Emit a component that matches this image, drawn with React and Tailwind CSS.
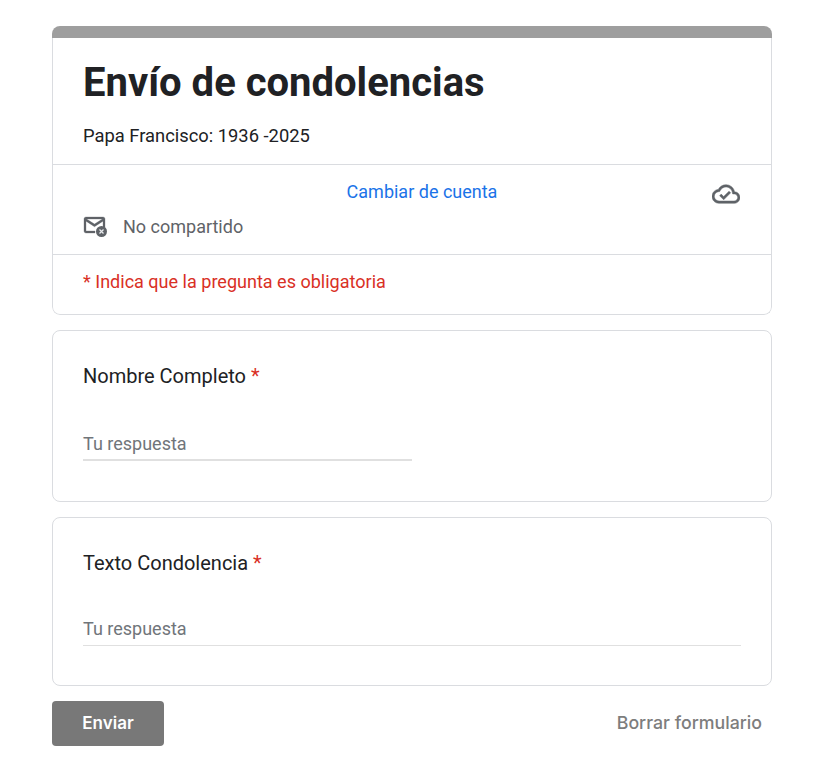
import React from 'react';

const MailOffIcon = () => (
  <svg width="24" height="24" viewBox="0 0 24 24" className="text-[#5f6368]">
    <path fill="currentColor" stroke="currentColor" strokeWidth="0.3" d="M3 2h17c1.1 0 2 .9 2 2v8.5h-2V6.2l-8.5 5.5L3 6.2V16h9v2H3c-1.1 0-2-.9-2-2V4c0-1.1.9-2 2-2zm.6 2l7.9 5.1L19.4 4H3.6z" />
    <circle cx="18.5" cy="16.5" r="5.5" fill="currentColor" />
    <path stroke="#e8eaed" strokeWidth="1.3" d="M16.5 14.5l4 4M20.5 14.5l-4 4" />
  </svg>
);

const CloudCheckIcon = () => (
  <svg width="28" height="28" viewBox="0 0 24 24" className="text-[#5f6368]">
    <path fill="currentColor" stroke="currentColor" strokeWidth="0.4" d="M19.35 10.04C18.67 6.59 15.64 4 12 4 9.11 4 6.6 5.64 5.35 8.04 2.34 8.36 0 10.91 0 14c0 3.31 2.69 6 6 6h13c2.76 0 5-2.24 5-5 0-2.64-2.05-4.78-4.65-4.96zM19 18H6c-2.21 0-4-1.79-4-4 0-2.05 1.53-3.76 3.56-3.97l1.07-.11.5-.95C8.08 7.14 9.94 6 12 6c2.62 0 4.88 1.86 5.39 4.43l.3 1.5 1.53.11c1.56.1 2.78 1.41 2.78 2.96 0 1.65-1.35 3-3 3zm-9-3.82l-2.09-2.09L6.5 13.5 10 17l6.01-6.01-1.41-1.41z" />
  </svg>
);

const Question = ({ label, hint, lineClass, className }) => (
  <div className={`bg-white border border-[#dadce0] rounded-lg px-[30px] ${className}`}>
    <div className="text-[20px] leading-6 text-[#202124]">
      {label} <span className="text-[#d93025]">*</span>
    </div>
    <div className={lineClass}>{hint}</div>
  </div>
);

export default function App() {
  return (
    <div className="min-h-screen bg-white font-['Roboto',sans-serif] pt-[26px] pl-[52px]">
      <div className="w-[720px] flex flex-col gap-[15px]">
        {/* Header card */}
        <div className="bg-white rounded-lg overflow-hidden">
          <div className="h-[12px] bg-[#9e9e9e]"></div>
          <div className="border-x border-b border-[#dadce0] rounded-b-lg">
            <div className="px-[30px] pt-[23px] pb-[16px] border-b border-[#dadce0]">
              <h1 className="text-[40px] leading-[44px] font-bold text-[#202124]">Envío de condolencias</h1>
              <p className="mt-[19px] text-[18.35px] leading-6 text-[#202124]">Papa Francisco: 1936 -2025</p>
            </div>
            <div className="relative h-[90px] px-[30px] border-b border-[#dadce0]">
              <div className="pt-[15px] pl-[20px] text-center text-[18px] leading-6 text-[#1a73e8]">Cambiar de cuenta</div>
              <div className="absolute right-[31px] top-[15px]"><CloudCheckIcon /></div>
              <div className="flex items-center gap-[16px] mt-[11px]">
                <MailOffIcon />
                <span className="text-[18px] leading-6 text-[#5f6368]">No compartido</span>
              </div>
            </div>
            <div className="px-[30px] pt-[15px] pb-[20px] text-[18.05px] leading-6 text-[#d93025]">
              * Indica que la pregunta es obligatoria
            </div>
          </div>
        </div>

        <Question
          label="Nombre Completo"
          hint="Tu respuesta"
          className="h-[172px] pt-[33px]"
          lineClass="mt-[44px] w-[329px] h-[29px] leading-[24px] text-[18px] text-[#70757a] border-b-2 border-[#e0e0e0]"
        />
        <Question
          label="Texto Condolencia"
          hint="Tu respuesta"
          className="h-[169px] pt-[33px]"
          lineClass="mt-[42px] h-[29px] leading-[24px] text-[18px] text-[#70757a] border-b border-[#e0e0e0]"
        />

        {/* Actions */}
        <div className="flex items-center justify-between">
          <button className="w-[112px] h-[45px] bg-[#787878] rounded text-white text-[17px] font-semibold font-['Inter',sans-serif]">Enviar</button>
          <button className="pr-[10px] text-[17.75px] font-medium text-[#7d7d7d] font-['Inter',sans-serif]">Borrar formulario</button>
        </div>
      </div>
    </div>
  );
}
